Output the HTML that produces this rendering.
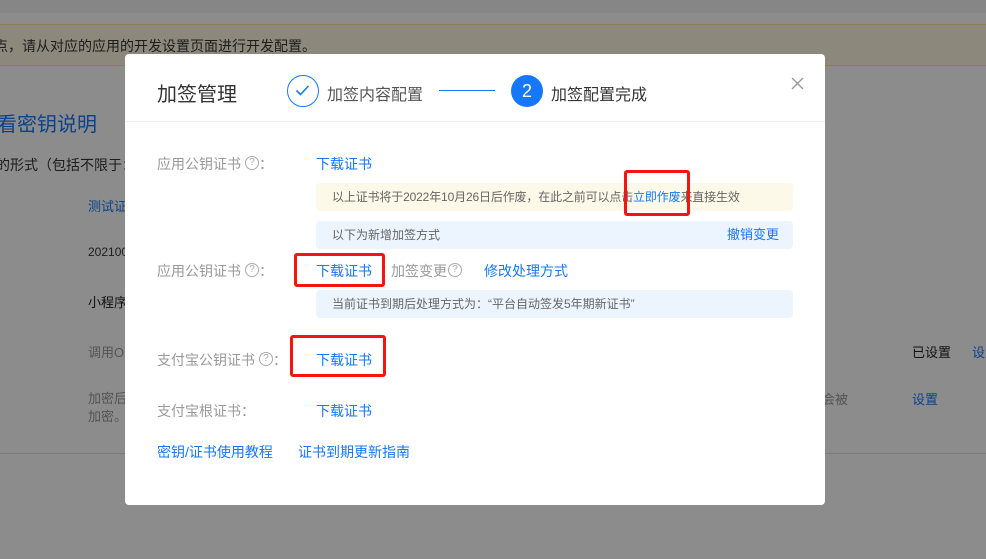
<!DOCTYPE html>
<html><head><meta charset="utf-8"><style>
*{margin:0;padding:0;box-sizing:border-box}
html,body{background:#8c8c8c}
body{width:986px;height:559px;overflow:hidden;position:relative;font-family:"Liberation Sans","Noto Sans CJK SC",sans-serif;}
.a{position:absolute;white-space:nowrap}
#m{position:absolute;left:125px;top:54px;width:700px;height:451px;background:#fff;border-radius:4px}
.lbl{color:#999;font-size:14px}
.lk{color:#1677ff;font-size:14px}
.q{display:inline-block;width:14px;height:14px;border:1.3px solid #aaa;border-radius:50%;font-size:10px;line-height:11px;text-align:center;color:#aaa;vertical-align:middle;position:relative;top:-2px;margin-left:4px}
.box{position:absolute;left:191px;width:477px;height:28px;border-radius:4px;font-size:12px;color:#666;line-height:28px;padding-left:16px}
.red{position:absolute;border:3px solid #f5140f;border-radius:3px}
</style></head><body>
<div class="a" style="left:0;top:0;width:986px;height:13px;background:#868686"></div>
<div class="a" style="left:0;top:24px;width:986px;height:42px;background:#8c887b;border-top:1px solid #8c7e4f;border-bottom:1px solid #8c7e4f"></div>
<div class="a" style="left:-6px;top:36px;font-size:14px;color:#1c1c1c">点，请从对应的应用的开发设置页面进行开发配置。</div>
<div class="a" style="left:-3px;top:108px;font-size:20px;color:#0c418c">看密钥说明</div>
<div class="a" style="left:-4px;top:155px;font-size:14px;color:#1c1c1c">的形式（包括不限于：</div>
<div class="a" style="left:88px;top:196px;font-size:13px;color:#0c418c">测试证书</div>
<div class="a" style="left:88px;top:245px;font-size:12px;color:#1c1c1c">20210000</div>
<div class="a" style="left:88px;top:292px;font-size:13px;color:#111">小程序</div>
<div class="a" style="left:88px;top:342px;font-size:13px;color:#545454">调用Op</div>
<div class="a" style="left:88px;top:390px;font-size:13px;color:#545454;line-height:18px">加密后<br>加密。</div>
<div class="a" style="left:822px;top:389px;font-size:13px;color:#545454">会被</div>
<div class="a" style="left:912px;top:342px;font-size:13px;color:#111">已设置</div>
<div class="a" style="left:972px;top:342px;font-size:13px;color:#0c418c">设置</div>
<div class="a" style="left:912px;top:389px;font-size:13px;color:#0c418c">设置</div>
<div class="a" style="left:0;top:453px;width:986px;height:1px;background:#7a7a7a"></div>
<div id="m">
 <div class="a" style="left:32px;top:24px;font-size:20px;color:#333">加签管理</div>
 <div class="a" style="left:162px;top:21px;width:32px;height:32px;border:1.5px solid #1677ff;border-radius:50%">
  <svg width="29" height="29" viewBox="0 0 29 29" style="position:absolute;left:0;top:0"><path d="M8.5 14.5l4 4 8-8.5" fill="none" stroke="#1677ff" stroke-width="1.6"/></svg></div>
 <div class="a" style="left:202px;top:27px;font-size:16px;color:#555">加签内容配置</div>
 <div class="a" style="left:314px;top:36px;width:56px;height:1px;background:#1677ff"></div>
 <div class="a" style="left:386px;top:21px;width:32px;height:32px;border-radius:50%;background:#1677ff;color:#fff;font-size:18px;line-height:32px;text-align:center">2</div>
 <div class="a" style="left:426px;top:27px;font-size:16px;color:#333">加签配置完成</div>
 <svg class="a" style="left:666px;top:23px" width="13" height="13"><path d="M1 1l11 11M12 1L1 12" stroke="#999" stroke-width="1.4"/></svg>
 <div class="a" style="left:0;top:67px;width:700px;height:1px;background:#eee"></div>

 <div class="a lbl" style="left:32px;top:100px">应用公钥证书<span class="q">?</span>：</div>
 <div class="a lk" style="left:191px;top:100px">下载证书</div>
 <div class="box" style="top:129px;background:#fcf9e8;letter-spacing:-0.15px">以上证书将于2022年10月26日后作废，在此之前可以点击<span style="color:#1677ff">立即作废</span>来直接生效</div>
 <div class="box" style="top:167px;background:#ecf4fe">以下为新增加签方式<span style="position:absolute;right:14px;color:#1677ff;font-size:13px">撤销变更</span></div>
 <div class="a lbl" style="left:32px;top:207px">应用公钥证书<span class="q">?</span>：</div>
 <div class="a lk" style="left:191px;top:207px">下载证书</div>
 <div class="a lbl" style="left:266px;top:207px">加签变更<span class="q" style="margin-left:1px">?</span></div>
 <div class="a lk" style="left:359px;top:207px">修改处理方式</div>
 <div class="box" style="top:236px;background:#ecf4fe">当前证书到期后处理方式为：“平台自动签发5年期新证书”</div>
 <div class="a lbl" style="left:32px;top:296px">支付宝公钥证书<span class="q">?</span>：</div>
 <div class="a lk" style="left:191px;top:296px">下载证书</div>
 <div class="a lbl" style="left:32px;top:347px">支付宝根证书：</div>
 <div class="a lk" style="left:191px;top:347px">下载证书</div>
 <div class="a lk" style="left:32px;top:388px">密钥/证书使用教程</div>
 <div class="a lk" style="left:173px;top:388px">证书到期更新指南</div>
</div>
<div class="red" style="left:624px;top:170px;width:66px;height:46px"></div>
<div class="red" style="left:294px;top:253px;width:91px;height:34px"></div>
<div class="red" style="left:290px;top:335px;width:96px;height:42px"></div>
</body></html>
